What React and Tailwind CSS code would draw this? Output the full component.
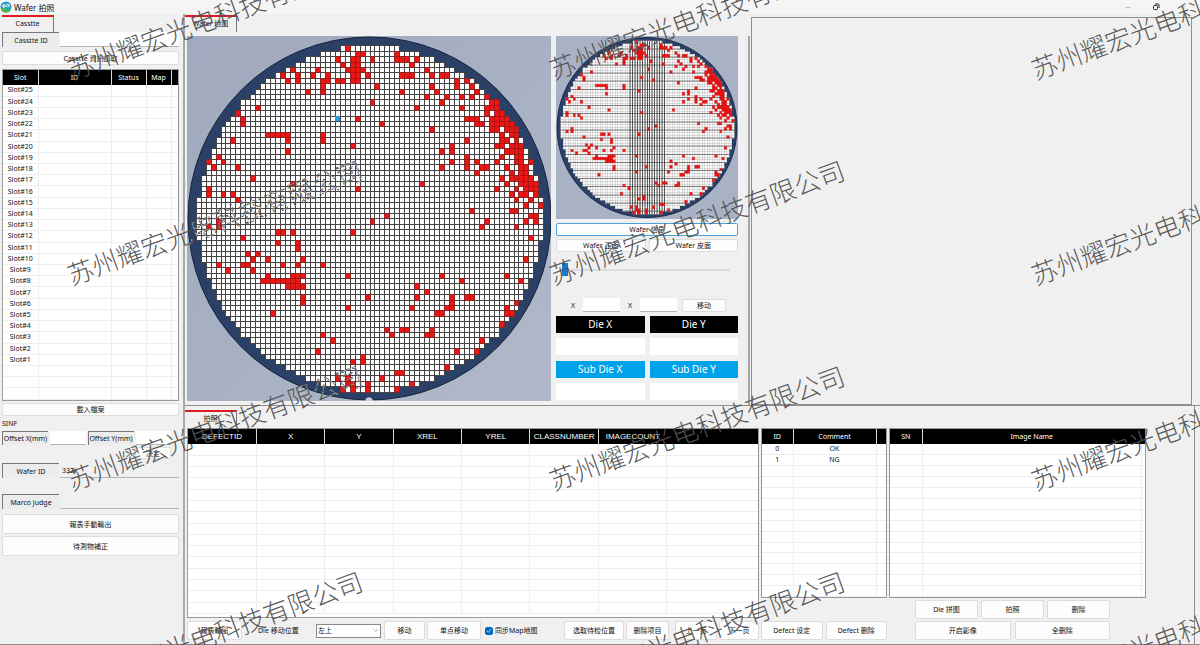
import React from "react";
import { ChevronDown, Check } from "lucide-react";

const COLS = 70;
const ROWS = 64;

// Failed dies, one list of columns per wafer row.
const FAILED = {
  0: [30], 1: [32, 33, 40], 2: [28, 31, 32, 35, 40, 41, 42, 44], 3: [29, 31, 32, 43],
  4: [19, 24, 30, 31, 32, 33, 46], 5: [17, 20, 23, 26, 31, 32, 34, 41, 42, 43, 47, 49, 50],
  6: [18, 20, 25, 26, 28, 29, 31, 32, 52, 54], 7: [25, 36, 47, 52, 55], 8: [22, 25, 41, 48, 56],
  9: [46, 50, 53, 55, 58, 59], 10: [35, 49, 59, 60], 11: [12, 44, 53, 58, 59, 60, 61],
  12: [8, 58, 60, 61], 13: [9, 32, 54, 55, 56, 59, 60, 61, 62], 14: [9, 37, 56, 57, 59, 60, 61, 62, 63],
  15: [47, 59, 60, 62, 63, 64], 16: [14, 15, 16, 17, 18, 25, 61, 63, 64], 17: [7, 18, 25, 54, 61, 62, 64],
  18: [31, 51, 60, 61, 63, 64, 65], 19: [18, 49, 51, 62, 63, 64, 65], 20: [4, 54, 61, 64, 65],
  21: [2, 5, 51, 54, 56, 60, 64, 65, 67], 22: [3, 8, 49, 54, 57, 58, 62, 65, 66], 23: [56, 63, 65, 66],
  24: [11, 61, 63, 64, 65, 66, 67], 25: [19, 45, 62, 65, 66, 67, 68], 26: [2, 32, 60, 64, 66, 67, 68],
  27: [2, 5, 7, 63, 65, 66, 68], 28: [8, 64, 67], 29: [66, 69], 30: [55, 63, 64], 31: [38, 67, 68],
  32: [4, 35, 58, 66, 68], 33: [2, 4, 57, 64], 34: [16, 17, 19, 31], 35: [9, 67], 36: [16, 20], 37: [20],
  38: [10, 12], 39: [11, 14, 21, 66], 40: [4, 9, 10, 17, 20, 25, 68], 41: [6, 11],
  42: [14, 19, 20, 21, 30, 49, 62], 43: [13, 14, 15, 16, 17, 18, 19, 20, 53, 65, 67],
  44: [18, 19, 20, 21, 44], 45: [46], 46: [21, 34, 44, 51, 54, 55], 47: [21, 51, 64, 65],
  48: [30, 43, 50, 51, 62], 49: [15, 48, 49, 62, 63], 50: [63], 51: [61], 52: [38, 41, 42, 47],
  53: [25, 39, 46, 47], 54: [27, 57], 56: [24, 52, 56, 57], 57: [33], 58: [31, 33], 59: [50],
  60: [40, 41], 61: [28, 30, 37], 62: [30, 31, 34, 43], 63: [29, 31, 34, 40],
};

const CURRENT = { row: 13, col: 28 };

function buildWafer(size) {
  const k = size / 364;
  const px = (c) => Math.round((8.7 + c * 4.966) * k * 2) / 2;
  const py = (r) => Math.round((9.3 + r * 5.41) * k * 2) / 2;
  const gx = (c) => (k === 1 ? Math.round(8.7 + c * 4.966) : px(c));
  const gy = (r) => (k === 1 ? Math.round(9.3 + r * 5.41) : py(r));
  const inside = (c, r) => {
    const dx = Math.max(Math.abs(c - 35), Math.abs(c + 1 - 35)) * 4.966;
    const dy = Math.max(Math.abs(r - 32), Math.abs(r + 1 - 32)) * 5.41;
    return dx * dx + dy * dy < 175.7 * 175.7;
  };
  const rect = (x, y, x2, y2) => `M${x} ${y}H${x2}V${y2}H${x}Z`;
  let base = "";
  let dies = "";
  let failed = "";
  for (let r = 0; r < ROWS; r++) {
    const bad = FAILED[r] || [];
    for (let c = 0; c < COLS; c++) {
      if (!inside(c, r)) continue;
      const gap = k === 1 ? 1 : 0.5;
      base += rect(gx(c), gy(r), gx(c + 1) + gap, gy(r + 1) + gap);
      dies += rect(gx(c) + gap, gy(r) + gap, gx(c + 1), gy(r + 1));
      if (bad.includes(c)) {
        failed += rect(gx(c) + gap / 2, gy(r) + gap / 2, gx(c + 1) + gap / 2, gy(r + 1) + gap / 2);
      }
    }
  }
  return { base, dies, failed, gx, gy };
}

const LARGE = buildWafer(364);
const SMALL = buildWafer(182);

function WaferMap() {
  const { base, dies, failed, gx, gy } = LARGE;
  return (
    <svg viewBox="0 0 364 365" className="block h-[365px] w-[364px] shrink-0 self-start" role="img" aria-label="Wafer 地图">
      <defs>
        <linearGradient id="stage" x1="0" y1="0" x2="1" y2="1">
          <stop offset="0" stopColor="#a0a9bd" />
          <stop offset="1" stopColor="#b0b8c9" />
        </linearGradient>
      </defs>
      <rect width="364" height="365" fill="url(#stage)" />
      <circle cx="182.5" cy="182.5" r="181.5" fill="#2b4066" stroke="#17233d" />
      <path d="M178 365c1-5 7-5 8 0z" fill="#c9cedb" />
      <path d={base} fill="#454545" />
      <path d={dies} fill="#fdfdfd" />
      <path d={failed} fill="#ea1614" stroke="#7c1010" strokeWidth="0.3" />
      <rect x={gx(CURRENT.col)} y={gy(CURRENT.row)} width="5" height="5" fill="#1ea3e6" />
    </svg>
  );
}

function WaferThumb() {
  const { base, dies, failed, gx, gy } = SMALL;
  const verticals = Array.from({ length: 15 }, (_, i) => `M${gx(28 + i)} 0V182`).join("");
  const horizontals = Array.from({ length: 22 }, (_, i) => `M0 ${gy(i * 3)}H182`).join("");
  return (
    <svg viewBox="0 0 182 183" className="block w-[182px]" role="img" aria-label="Wafer 缩图">
      <clipPath id="thumb-dies">
        <path d={base} />
      </clipPath>
      <rect width="182" height="183" fill="#a9b1c4" />
      <circle cx="91" cy="91.5" r="90" fill="#2b4066" stroke="#1d2c4b" />
      <path d={base} fill="#bdbdbd" />
      <path d={dies} fill="#fbfbfb" />
      <g clipPath="url(#thumb-dies)" fill="none">
        <path d={horizontals} stroke="#555" strokeWidth="0.7" />
        <path d={verticals} stroke="#333" strokeWidth="0.8" />
      </g>
      <path d={failed} fill="#e01414" stroke="#e01414" strokeWidth="0.4" />
    </svg>
  );
}

function Btn({ className = "", children }) {
  return (
    <button
      type="button"
      className={`flex items-center justify-center whitespace-nowrap rounded-xs border border-[#dcdcdc] bg-[#fdfdfd] ${className}`}
    >
      {children}
    </button>
  );
}

function Tab({ children }) {
  return (
    <button
      type="button"
      className="flex h-[17px] w-[52px] items-center justify-center whitespace-nowrap border-t-2 border-r border-t-[#e01b22] border-r-[#777] pb-0.5"
    >
      {children}
    </button>
  );
}

const sunken = "flex items-center justify-center whitespace-nowrap border-t border-l border-[#777] bg-[#ececec]";
const field = "min-w-0 border-b border-[#b5b5b5] px-0.5 outline-none";

function Grid({ columns, rows, count, className = "", headClass = "" }) {
  return (
    <div className={`flex flex-col border border-[#9a9a9a] bg-white ${className}`}>
      <table className="h-full w-full table-fixed border-collapse">
        <colgroup>
          {columns.map((c, i) => (
            <col key={i} className={c.width} />
          ))}
        </colgroup>
        <thead>
          <tr className="h-[15px] bg-black text-white">
            {columns.map((c, i) => (
              <th
                key={i}
                className={`p-0 font-normal ${headClass} ${c.open || i === columns.length - 1 ? "" : "border-r border-[#d8d8d8]"}`}
              >
                {c.title}
              </th>
            ))}
          </tr>
        </thead>
        <tbody>
          {Array.from({ length: count }, (_, r) => (
            <tr key={r} className="h-[10px]">
              {columns.map((_, i) => (
                <td
                  key={i}
                  className={`border-b border-[#eeeeee] p-0 text-center leading-[8px] ${i === columns.length - 1 ? "" : "border-r"}`}
                >
                  {rows[r]?.[i] ?? "\u00a0"}
                </td>
              ))}
            </tr>
          ))}
        </tbody>
      </table>
    </div>
  );
}

const SLOT_COLUMNS = [
  { title: "Slot", width: "w-[35px]" },
  { title: "ID" },
  { title: "Status", width: "w-[35px]" },
  { title: "Map", width: "w-[25px]" },
  { title: "", width: "w-[7px]" },
];
const SLOT_ROWS = Array.from({ length: 25 }, (_, i) => [`Slot#${25 - i}`]);

const DEFECT_COLUMNS = [
  { title: "DEFECTID", width: "w-[12%]" },
  { title: "X", width: "w-[12%]" },
  { title: "Y", width: "w-[12%]" },
  { title: "XREL", width: "w-[12%]" },
  { title: "YREL", width: "w-[12%]" },
  { title: "CLASSNUMBER", width: "w-[12%]" },
  { title: "IMAGECOUNT", width: "w-[12%]", open: true },
  { title: "" },
];

const COMMENT_COLUMNS = [
  { title: "ID", width: "w-[31px]" },
  { title: "Comment" },
  { title: "", width: "w-[10px]" },
];

const IMAGE_COLUMNS = [
  { title: "SN", width: "w-[32px]" },
  { title: "Image Name", open: true },
  { title: "", width: "w-[4px]" },
];

function Sidebar() {
  return (
    <aside className="flex w-[185px] shrink-0 flex-col border-r-2 border-[#a9a9a9] pt-px pr-1 pl-0.5">
      <Tab>Casstte</Tab>
      <div className="flex h-[15px] gap-px">
        <label htmlFor="cassette-id" className={`w-[57px] ${sunken}`}>Casstte ID</label>
        <input id="cassette-id" className={`flex-1 bg-white ${field}`} />
      </div>
      <Btn className="mt-1 h-[14px]">Casstte 資訊讀取</Btn>
      <Grid columns={SLOT_COLUMNS} rows={SLOT_ROWS} count={28} className="mt-1 h-[332px]" />
      <Btn className="mt-0.5 h-[13px]">載入檔案</Btn>
      <h2 className="mt-0.5 h-[12px] leading-[12px]">SINF</h2>
      <div className="mt-px mr-2 flex h-[14px] gap-0.5">
        <label htmlFor="offset-x" className={`w-[46px] ${sunken}`}>Offset X(mm)</label>
        <input id="offset-x" className={`flex-1 bg-white ${field}`} />
        <label htmlFor="offset-y" className={`w-[46px] ${sunken}`}>Offset Y(mm)</label>
        <input id="offset-y" className={`flex-1 bg-white ${field}`} />
      </div>
      <Btn className="mt-0.5 mr-2 h-[12px] w-[36px] self-end">决定</Btn>
      <div className="mt-1 flex h-[15px] gap-px">
        <label htmlFor="wafer-id" className={`w-[57px] ${sunken}`}>Wafer ID</label>
        <input id="wafer-id" defaultValue="332k" className={`flex-1 bg-transparent ${field}`} />
      </div>
      <div className="mt-4 flex h-[15px] gap-px">
        <label htmlFor="macro-judge" className={`w-[57px] ${sunken}`}>Marco Judge</label>
        <input id="macro-judge" className={`flex-1 bg-transparent ${field}`} />
      </div>
      <Btn className="mt-[5px] h-[20px]">報表手動輸出</Btn>
      <Btn className="mt-0.5 h-[20px]">待測物補正</Btn>
    </aside>
  );
}

function MapControls() {
  const head = "flex h-[17px] items-center justify-center text-[10px] text-white";
  return (
    <div className="flex w-[182px] shrink-0 flex-col">
      <WaferThumb />
      <Btn className="mt-1 h-[13px] !border-[#4aa3e0]">Wafer 信息</Btn>
      <div className="mt-[3px] grid grid-cols-2 gap-[3px]">
        <Btn className="h-[13px]">Wafer 正面</Btn>
        <Btn className="h-[13px]">Wafer 皮面</Btn>
      </div>
      <input
        type="range"
        aria-label="缩放"
        defaultValue="0"
        className="mt-[11px] mr-2 ml-[6px] h-[13px] appearance-none bg-transparent [&::-webkit-slider-runnable-track]:h-[2px] [&::-webkit-slider-runnable-track]:bg-[#dcdcdc] [&::-webkit-slider-thumb]:-mt-[6px] [&::-webkit-slider-thumb]:h-[13px] [&::-webkit-slider-thumb]:w-[6px] [&::-webkit-slider-thumb]:appearance-none [&::-webkit-slider-thumb]:bg-[#0f7bd4]"
      />
      <div className="mt-[22px] mr-3 ml-[15px] flex h-[14px] items-center">
        <label htmlFor="move-x" className="w-[12px]">X</label>
        <input id="move-x" className={`h-full w-[37px] bg-white ${field}`} />
        <label htmlFor="move-y" className="ml-2 w-[12px]">X</label>
        <input id="move-y" className={`h-full w-[37px] bg-white ${field}`} />
        <Btn className="ml-[5px] h-[13px] flex-1">移动</Btn>
      </div>
      <div className="mt-1 grid grid-cols-2 gap-x-[5px] gap-y-[5px]">
        <label htmlFor="die-x" className={`bg-black ${head}`}>Die X</label>
        <label htmlFor="die-y" className={`bg-black ${head}`}>Die Y</label>
        <input id="die-x" className="h-[17px] min-w-0 bg-white" />
        <input id="die-y" className="h-[17px] min-w-0 bg-white" />
        <label htmlFor="sub-x" className={`mt-px bg-[#00a2e8] ${head}`}>Sub Die X</label>
        <label htmlFor="sub-y" className={`mt-px bg-[#00a2e8] ${head}`}>Sub Die Y</label>
        <input id="sub-x" className="h-[17px] min-w-0 bg-white" />
        <input id="sub-y" className="h-[17px] min-w-0 bg-white" />
      </div>
    </div>
  );
}

function DefectPanel() {
  return (
    <div className="flex min-w-0 flex-1 flex-col">
      <Grid columns={DEFECT_COLUMNS} rows={[]} count={15} className="h-[190px] pb-[3px]" headClass="font-['Liberation_Sans'] text-[8px]" />
      <div className="mt-[3px] flex h-[19px] items-center">
        <Btn className="h-full w-[55px]">報表輸出</Btn>
        <label htmlFor="die-pos" className="ml-4 w-[58px] whitespace-nowrap">Die 移动位置</label>
        <span className="relative flex h-[14px] w-[65px]">
          <select id="die-pos" className="w-full appearance-none border border-[#8a8a8a] bg-white px-px leading-[11px]">
            <option>左上</option>
            <option>右下</option>
          </select>
          <ChevronDown className="pointer-events-none absolute top-[3px] right-[2px] h-[7px] w-[7px] text-[#666]" />
        </span>
        <Btn className="ml-[3px] h-full w-[41px]">移动</Btn>
        <Btn className="ml-0.5 h-full w-[54px]">单点移动</Btn>
        <label className="ml-1 flex items-center gap-0.5 whitespace-nowrap">
          <span className="relative flex h-[8px] w-[8px]">
            <input type="checkbox" defaultChecked className="peer h-[8px] w-[8px] appearance-none rounded-xs border border-[#0067c0] checked:bg-[#0067c0]" />
            <Check className="pointer-events-none absolute top-px left-px hidden h-[6px] w-[6px] text-white peer-checked:block" strokeWidth={3} />
          </span>
          同步Map地图
        </label>
        <div className="ml-auto flex h-full gap-0.5">
          <Btn className="w-[60px]">选取待检位置</Btn>
          <Btn className="w-[43px]">删除项目</Btn>
          <Btn className="ml-1 w-[42px]">上一页</Btn>
          <Btn className="w-[40px]">下一页</Btn>
        </div>
      </div>
    </div>
  );
}

function Watermarks() {
  const marks = [];
  for (let col = 0; col < 3; col++) {
    for (let row = 0; row < 4; row++) {
      marks.push([81 + col * 482, 67 + row * 205.5]);
    }
  }
  const lines = marks.map(([x, y]) => (
    <text key={`${x}-${y}`} transform={`translate(${x} ${y}) rotate(-20)`} x="-13" y="9">
      苏州耀宏光电科技有限公司
    </text>
  ));
  return (
    <svg
      aria-hidden="true"
      className="pointer-events-none absolute inset-0 h-full w-full overflow-hidden font-['Noto_Sans_CJK_SC',sans-serif] text-[26px] font-light"
    >
      <clipPath id="outside-wafer">
        <path clipRule="evenodd" d="M0 0H4000V4000H0ZM187.5 218.5a182 182 0 1 0 364 0a182 182 0 1 0 -364 0Z" />
      </clipPath>
      <clipPath id="inside-wafer">
        <circle cx="369.5" cy="218.5" r="182" />
      </clipPath>
      <g clipPath="url(#outside-wafer)" fill="#505050" fillOpacity="0.95">{lines}</g>
      <g clipPath="url(#inside-wafer)" fill="#ffffff" fillOpacity="0.5" stroke="#2c2c2c" strokeWidth="0.6" strokeDasharray="4 2">
        {lines}
      </g>
    </svg>
  );
}

export default function App() {
  return (
    <div className="relative flex min-h-screen flex-col overflow-hidden bg-[#f0f0f0] font-['Noto_Sans','Noto_Sans_CJK_SC',sans-serif] text-[7px] leading-[9px] text-[#111]">
      <header className="flex h-[14px] items-center bg-[#f5f5f5] text-[8px]">
        <svg viewBox="0 0 12 12" className="h-[12px] w-[12px]" aria-hidden="true">
          <circle cx="6" cy="6" r="5.5" fill="#1b9bd8" />
          <path d="M1 8c2-2 4-1 5 0s3 1 5-1c0 3-2 4.500-5 4.500S1.500 10 1 8z" fill="#49b648" />
          <circle cx="4" cy="5" r="1.800" fill="#fff" />
          <circle cx="8" cy="4.500" r="1.800" fill="#e6f7d0" />
          <circle cx="4.200" cy="5" r="0.600" fill="#234" />
          <circle cx="7.800" cy="4.600" r="0.600" fill="#234" />
        </svg>
        <h1 className="ml-0.5">Wafer 拍照</h1>
        <div className="mr-3 ml-auto flex gap-5">
          <button type="button" aria-label="最小化" className="h-[8px] w-[8px]">
            <svg viewBox="0 0 8 8"><path d="M1 4.500H7" stroke="#c4c4c4" /></svg>
          </button>
          <button type="button" aria-label="还原" className="h-[8px] w-[8px]">
            <svg viewBox="0 0 8 8" fill="none" stroke="#222"><rect x="1.500" y="2.500" width="4" height="4" rx="1" /><path d="M3 1H6q1 0 1 1V5" /></svg>
          </button>
          <button type="button" aria-label="关闭" className="h-[8px] w-[8px]">
            <svg viewBox="0 0 8 8"><path d="M1.500 1.500L6.500 6.500M6.500 1.500L1.500 6.500" stroke="#ddd" /></svg>
          </button>
        </div>
      </header>

      <div className="flex flex-1 border-b border-[#8a8a8a]">
        <Sidebar />
        <main className="flex min-w-0 flex-1 flex-col">
          <div className="flex h-[392px] border-b border-[#8f8f8f] pr-2">
            <section className="flex shrink-0 flex-col pt-px">
              <Tab>Wafer 地图</Tab>
              <div className="mt-1 flex flex-1 gap-[5px] border-r-2 border-[#a5a5a5] pr-[10px] pl-0.5">
                <WaferMap />
                <MapControls />
              </div>
            </section>
            <section aria-label="影像" className="mt-[3px] ml-px flex-1 border border-[#8f8f8f]" />
          </div>

          <section className="mr-[5px] flex flex-1 flex-col border-r border-[#8f8f8f] pt-1">
            <Tab>拍照</Tab>
            <div className="mt-px flex pr-12 pl-0.5">
              <DefectPanel />
              <div className="ml-0.5 flex w-[126px] shrink-0 flex-col">
                <Grid columns={COMMENT_COLUMNS} rows={[["0", "OK"], ["1", "NG"]]} count={14} className="h-[170px]" />
                <div className="mt-[23px] grid h-[19px] grid-cols-2 gap-[3px]">
                  <Btn>Defect 设定</Btn>
                  <Btn>Defect 删除</Btn>
                </div>
              </div>
              <div className="ml-0.5 flex w-[257px] shrink-0 flex-col">
                <Grid columns={IMAGE_COLUMNS} rows={[]} count={14} className="h-[170px]" />
                <div className="mt-0.5 mr-9 ml-[26px] grid grid-cols-3 gap-[3px]">
                  <Btn className="h-[19px]">Die 拼图</Btn>
                  <Btn className="h-[19px]">拍照</Btn>
                  <Btn className="h-[19px]">删除</Btn>
                </div>
                <div className="mt-0.5 mr-9 ml-[26px] grid grid-cols-2 gap-1">
                  <Btn className="h-[19px]">开启影像</Btn>
                  <Btn className="h-[19px]">全删除</Btn>
                </div>
              </div>
            </div>
          </section>
        </main>
      </div>
      <Watermarks />
    </div>
  );
}
